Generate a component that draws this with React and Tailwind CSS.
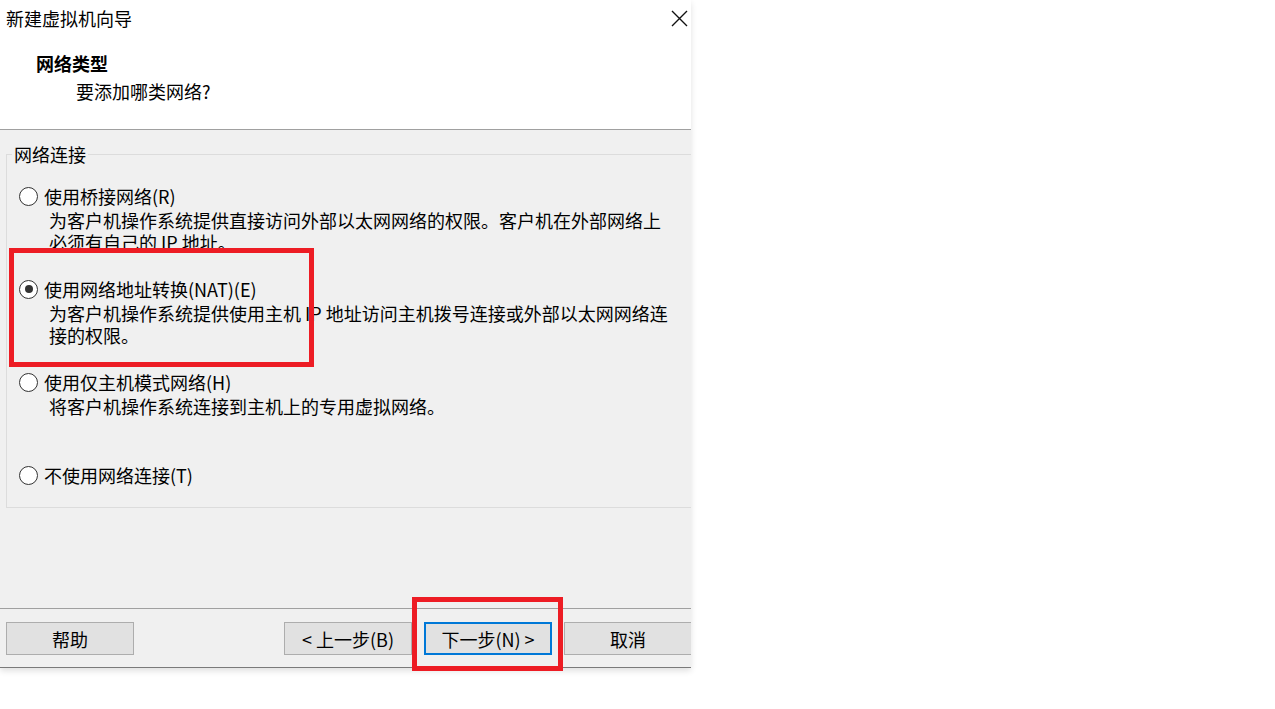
import React from "react";

const FONT = { fontFamily: '"Noto Sans CJK SC", "Noto Sans", sans-serif' };

function Radio({ checked }) {
  return (
    <span className="flex h-[19px] w-[19px] shrink-0 items-center justify-center rounded-full border border-[#333333] bg-white">
      {checked && <span className="h-[8px] w-[8px] rounded-full bg-[#333333]" />}
    </span>
  );
}

function Option({ checked, label, lines, className = "" }) {
  return (
    <div className={className}>
      <div className="flex h-[22px] items-center">
        <Radio checked={checked} />
        <span className="ml-[6px] whitespace-nowrap leading-[22px]">{label}</span>
      </div>
      {lines.map((l, i) => (
        <div
          key={i}
          className={`ml-[30px] h-[22px] whitespace-nowrap leading-[22px] ${i === 0 ? "mt-[2px]" : ""}`}
        >
          {l}
        </div>
      ))}
    </div>
  );
}

function Btn({ children, active, className = "" }) {
  return (
    <div
      className={`flex h-[33px] w-[128px] shrink-0 items-center justify-center bg-[#e1e1e1] text-[18px] leading-none text-black ${
        active ? "border-2 border-[#0078d7]" : "border border-[#adadad]"
      } ${className}`}
    >
      {children}
    </div>
  );
}

export default function App() {
  return (
    <div className="relative h-[709px] w-[1275px] overflow-hidden bg-white text-[18px] text-black" style={FONT}>
      <div className="flex w-[691px] flex-col overflow-hidden shadow-[0_3px_6px_rgba(0,0,0,0.12)]">
        {/* header */}
        <div className="h-[130px] border-b border-[#a0a0a0] bg-white">
          <div className="flex h-[36px] items-center justify-between pl-[6px] pr-[3px]">
            <span className="leading-[22px]">新建虚拟机向导</span>
            <svg width="17" height="17" viewBox="0 0 17 17">
              <path d="M1 1 L16 16 M16 1 L1 16" stroke="#111" strokeWidth="1.4" fill="none" />
            </svg>
          </div>
          <div className="ml-[36px] mt-[16px] h-[22px] font-bold leading-[22px]">网络类型</div>
          <div className="ml-[76px] mt-[6px] h-[22px] leading-[22px]">要添加哪类网络?</div>
        </div>
        {/* body */}
        <div className="h-[478px] bg-[#f0f0f0] pt-[13px]">
          <fieldset className="ml-[6px] w-[720px] border border-[#dcdcdc] pb-[21px] pl-[12px] pt-[20px]">
            <legend className="-ml-[7px] h-[22px] px-[2px] leading-[22px]">网络连接</legend>
            <Option
              label="使用桥接网络(R)"
              lines={[
                "为客户机操作系统提供直接访问外部以太网网络的权限。客户机在外部网络上",
                "必须有自己的 IP 地址。",
              ]}
            />
            <Option
              className="mt-[25px]"
              checked
              label="使用网络地址转换(NAT)(E)"
              lines={[
                "为客户机操作系统提供使用主机 IP 地址访问主机拨号连接或外部以太网网络连",
                "接的权限。",
              ]}
            />
            <Option
              className="mt-[25px]"
              label="使用仅主机模式网络(H)"
              lines={["将客户机操作系统连接到主机上的专用虚拟网络。"]}
            />
            <Option className="mt-[47px]" label="不使用网络连接(T)" lines={[]} />
          </fieldset>
        </div>
        {/* footer */}
        <div className="flex h-[60px] border-y border-[#a0a0a0] border-b-[#7a7a7a] bg-[#f0f0f0] pt-[13px]">
          <Btn className="ml-[6px]">帮助</Btn>
          <div className="ml-[150px] flex gap-[12px]">
            <Btn>&lt; 上一步(B)</Btn>
            <Btn active>下一步(N) &gt;</Btn>
            <Btn>取消</Btn>
          </div>
        </div>
      </div>

      {/* annotation highlights */}
      <div className="absolute left-[9px] top-[248px] h-[119px] w-[305px] border-[5px] border-[#ed1c24]" />
      <div className="absolute left-[412px] top-[597px] h-[74px] w-[151px] border-[5px] border-[#ed1c24]" />
    </div>
  );
}
